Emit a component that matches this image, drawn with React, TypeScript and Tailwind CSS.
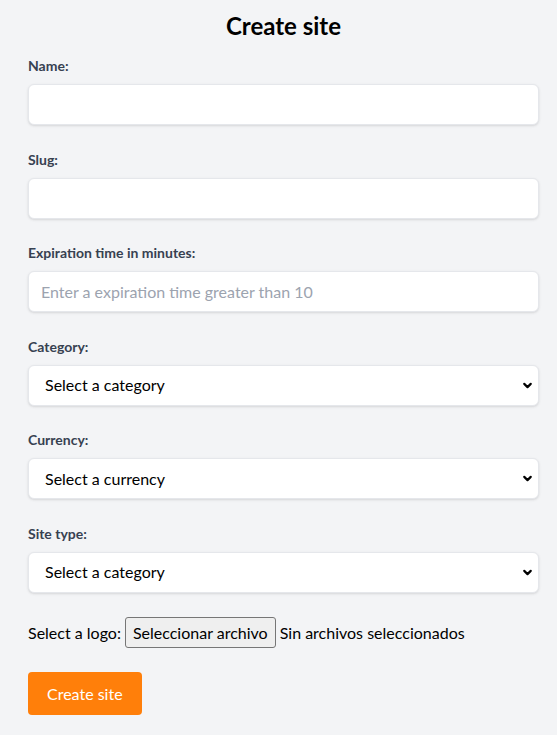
import { ChevronDown } from 'lucide-react';

const fields = [
  { label: 'Name:', type: 'input', placeholder: '' },
  { label: 'Slug:', type: 'input', placeholder: '' },
  {
    label: 'Expiration time in minutes:',
    type: 'input',
    placeholder: 'Enter a expiration time greater than 10',
  },
  { label: 'Category:', type: 'select', placeholder: 'Select a category' },
  { label: 'Currency:', type: 'select', placeholder: 'Select a currency' },
  { label: 'Site type:', type: 'select', placeholder: 'Select a category' },
];

export default function App() {
  return (
    <div
      className="min-h-screen bg-[#f3f4f6] pl-7 pr-[18px] pt-[10px] pb-6 text-black"
      style={{ fontFamily: 'Lato, "Noto Sans", sans-serif' }}
    >
      <h1 className="text-center text-2xl font-bold leading-8 mb-[14px]">Create site</h1>

      <form className="flex flex-col">
        {fields.map((field) => (
          <div key={field.label} className="mb-[24.5px]">
            <label className="block text-sm font-bold leading-5 text-[#374151] mb-2">
              {field.label}
            </label>
            {field.type === 'input' ? (
              <input
                type="text"
                placeholder={field.placeholder}
                className="w-full h-[41px] rounded-md border border-[#e5e7eb] bg-white px-3 text-base shadow-sm outline-none placeholder:text-[#9ca3af]"
              />
            ) : (
              <div className="relative">
                <select className="w-full h-[41px] appearance-none rounded-md border border-[#e5e7eb] bg-white px-4 text-base shadow-sm outline-none">
                  <option>{field.placeholder}</option>
                </select>
                <ChevronDown
                  size={13}
                  strokeWidth={4}
                  className="pointer-events-none absolute right-[5px] top-[14px] text-black"
                />
              </div>
            )}
          </div>
        ))}

        {/* Logo picker */}
        <div className="flex items-center text-base leading-6 mb-6">
          <span>Select a logo:</span>
          <span className="ml-1 h-[31px] flex items-center rounded-[3px] border border-[#767676] bg-[#efefef] px-[7px]">
            Seleccionar archivo
          </span>
          <span className="ml-1">Sin archivos seleccionados</span>
        </div>

        <div>
          <button
            type="button"
            className="h-[43px] rounded-[4px] bg-[#ff7f0a] px-[19px] text-base text-white"
          >
            Create site
          </button>
        </div>
      </form>
    </div>
  );
}
